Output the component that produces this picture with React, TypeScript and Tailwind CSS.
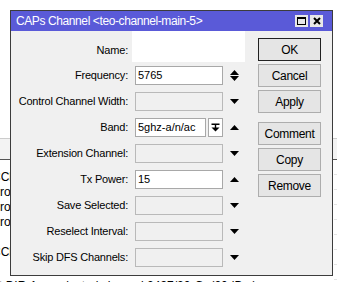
import React from 'react'

type Arrow = 'down' | 'up' | 'updown' | 'none'

type Row = {
  label: string
  value?: string
  enabled?: boolean
  arrow: Arrow
  band?: boolean
}

const rows: Row[] = [
  { label: 'Frequency:', value: '5765', enabled: true, arrow: 'updown' },
  { label: 'Control Channel Width:', arrow: 'down' },
  { label: 'Band:', value: '5ghz-a/n/ac', enabled: true, arrow: 'up', band: true },
  { label: 'Extension Channel:', arrow: 'down' },
  { label: 'Tx Power:', value: '15', enabled: true, arrow: 'up' },
  { label: 'Save Selected:', arrow: 'down' },
  { label: 'Reselect Interval:', arrow: 'down' },
  { label: 'Skip DFS Channels:', arrow: 'down' },
]

function Tri({ up }: { up?: boolean }) {
  return (
    <svg width="9" height="5" viewBox="0 0 9 5" className="block">
      <polygon points={up ? '0,5 9,5 4.5,0' : '0,0 9,0 4.5,5'} fill="#000" />
    </svg>
  )
}

function ArrowCell({ kind }: { kind: Arrow }) {
  return (
    <div className="ml-[7px] flex w-[9px] flex-col items-center justify-center gap-[1px]">
      {kind === 'updown' && (
        <>
          <Tri up />
          <Tri />
        </>
      )}
      {kind === 'down' && <Tri />}
      {kind === 'up' && <Tri up />}
    </div>
  )
}

function Btn({ label, primary }: { label: string; primary?: boolean }) {
  return (
    <button
      type="button"
      className={
        'flex h-[23px] w-[63px] items-center justify-center bg-[#e5e5e5] text-[12px] tracking-[-0.3px] text-black ' +
        (primary ? 'border border-[#222]' : 'border border-[#adadad]')
      }
    >
      {label}
    </button>
  )
}

export default function App() {
  return (
    <div className="relative h-[282px] w-[337px] overflow-hidden bg-white font-['Liberation_Sans',Arial,sans-serif] text-[11px] text-black">
      {/* janela de fundo: tabela parcialmente visível */}
      <div className="absolute left-0 right-0 top-[138px] h-[22px] border-b border-t border-b-[#555] border-t-[#ccc] bg-[#f3f3f3]" />
      <div className="absolute left-[-8px] top-[170px] flex flex-col text-[12px] leading-[15px]">
        <span>CCl</span>
        <span>Prot</span>
        <span>Prot</span>
        <span>Prot</span>
        <span className="mt-[15px]">CCl</span>
      </div>
      <div className="absolute left-[334px] top-[160px] flex w-[3px] flex-col">
        {[0, 1, 2, 3, 4, 5, 6, 7].map((i) => (
          <div key={i} className="h-[15px] border-b border-[#e4e4e4]" />
        ))}
      </div>
      <div className="absolute left-[-1px] top-[277px] whitespace-nowrap text-[12px]">
        t DIR-1 ... selected channel 2437/20-Gn(20dBm)
      </div>

      {/* diálogo */}
      <div className="absolute left-[10px] top-[10px] flex h-[266px] w-[323px] flex-col border border-[#3c3c3c] bg-[#f0f0f0]">
        <div className="flex h-[20px] items-center justify-between bg-[#5a5ad8] pl-[5px] pr-[9px] text-white">
          <span className="text-[12px] tracking-[-0.4px]">CAPs Channel &lt;teo-channel-main-5&gt;</span>
          <div className="flex gap-[2px]">
            <div className="flex h-[12px] w-[13px] items-center justify-center bg-[#e8e8e8]">
              <div className="h-[8px] w-[9px] border border-black border-t-2" />
            </div>
            <div className="flex h-[12px] w-[13px] items-center justify-center bg-[#e8e8e8]">
              <svg width="8" height="8" viewBox="0 0 8 8">
                <path d="M1 1 L7 7 M7 1 L1 7" stroke="#000" strokeWidth="2" />
              </svg>
            </div>
          </div>
        </div>

        <div className="flex">
          <div className="w-[237px]">
            <div className="flex h-[31px] items-center">
              <div className="w-[117px] pt-[7px] text-right tracking-[-0.2px]">Name:</div>
              <div className="ml-[4px] h-[31px] w-[113px] bg-white" />
            </div>
            {rows.map((r) => (
              <div key={r.label} className="flex h-[26px] items-center">
                <div className="w-[117px] text-right tracking-[-0.2px]">{r.label}</div>
                {r.band ? (
                  <div className="ml-[7px] flex w-[88px] gap-[2px]">
                    <div className="flex h-[19px] w-[71px] items-center border border-[#a8a8a8] bg-white px-[2px]">
                      {r.value}
                    </div>
                    <div className="flex h-[19px] w-[15px] items-center justify-center border border-[#a8a8a8] bg-white">
                      <svg width="9" height="9" viewBox="0 0 9 9">
                        <rect x="0.5" y="0.5" width="8" height="1.5" fill="#000" />
                        <rect x="3.8" y="2" width="1.4" height="3" fill="#000" />
                        <polygon points="0.5,4.5 8.5,4.5 4.5,8.5" fill="#000" />
                      </svg>
                    </div>
                  </div>
                ) : (
                  <div
                    className={
                      'ml-[7px] flex h-[19px] w-[88px] items-center border px-[2px] ' +
                      (r.enabled ? 'border-[#a8a8a8] bg-white' : 'border-[#b9b9b9] bg-[#f0f0f0]')
                    }
                  >
                    {r.value}
                  </div>
                )}
                <ArrowCell kind={r.arrow} />
              </div>
            ))}
          </div>

          <div className="ml-[10px] flex flex-col pt-[7px]">
            <div className="flex flex-col gap-[3px]">
              <Btn label="OK" primary />
              <Btn label="Cancel" />
              <Btn label="Apply" />
            </div>
            <div className="mt-[9px] flex flex-col gap-[3px]">
              <Btn label="Comment" />
              <Btn label="Copy" />
              <Btn label="Remove" />
            </div>
          </div>
        </div>
      </div>
    </div>
  )
}
